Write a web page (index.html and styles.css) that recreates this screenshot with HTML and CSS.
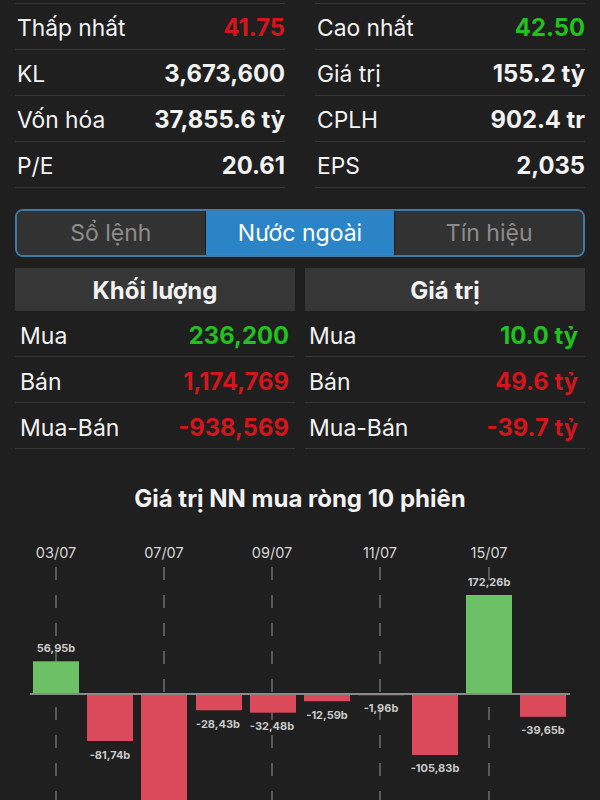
FILE: index.html
```html
<!DOCTYPE html>
<html lang="vi">

<head>
    <meta charset="UTF-8">
    <meta name="viewport" content="width=device-width, initial-scale=1.0">
    <title>Nước ngoài</title>
    <link rel="stylesheet" href="styles.css">
</head>

<body>
    <div class="stats">
        <div class="stats-col">
            <div class="stat-row"><span class="label">Thấp nhất</span><span class="value down">41.75</span></div>
            <div class="stat-row"><span class="label">KL</span><span class="value">3,673,600</span></div>
            <div class="stat-row"><span class="label">Vốn hóa</span><span class="value">37,855.6 tỷ</span></div>
            <div class="stat-row"><span class="label">P/E</span><span class="value">20.61</span></div>
        </div>
        <div class="stats-col">
            <div class="stat-row"><span class="label">Cao nhất</span><span class="value up">42.50</span></div>
            <div class="stat-row"><span class="label">Giá trị</span><span class="value">155.2 tỷ</span></div>
            <div class="stat-row"><span class="label">CPLH</span><span class="value">902.4 tr</span></div>
            <div class="stat-row"><span class="label">EPS</span><span class="value">2,035</span></div>
        </div>
    </div>

    <div class="tabs">
        <div class="tab">Sổ lệnh</div>
        <div class="tab active">Nước ngoài</div>
        <div class="tab">Tín hiệu</div>
    </div>

    <div class="foreign">
        <div class="foreign-col">
            <div class="foreign-header">Khối lượng</div>
            <div class="foreign-row"><span>Mua</span><span class="value up">236,200</span></div>
            <div class="foreign-row"><span>Bán</span><span class="value down">1,174,769</span></div>
            <div class="foreign-row"><span>Mua-Bán</span><span class="value down">-938,569</span></div>
        </div>
        <div class="foreign-col right">
            <div class="foreign-header">Giá trị</div>
            <div class="foreign-row"><span>Mua</span><span class="value up">10.0 tỷ</span></div>
            <div class="foreign-row"><span>Bán</span><span class="value down">49.6 tỷ</span></div>
            <div class="foreign-row"><span>Mua-Bán</span><span class="value down">-39.7 tỷ</span></div>
        </div>
    </div>

    <div class="chart">
        <h2 class="chart-title">Giá trị NN mua ròng 10 phiên</h2>
        <!-- viewBox dùng toạ độ trang để dễ canh -->
        <svg class="chart-svg" width="600" height="288" viewBox="0 512 600 288">
            <g class="dates">
                <text x="56" y="558">03/07</text>
                <text x="164" y="558">07/07</text>
                <text x="272" y="558">09/07</text>
                <text x="380" y="558">11/07</text>
                <text x="489" y="558">15/07</text>
            </g>
            <g class="grid">
                <line x1="56" y1="567" x2="56" y2="800" />
                <line x1="164" y1="567" x2="164" y2="800" />
                <line x1="272" y1="567" x2="272" y2="800" />
                <line x1="380" y1="567" x2="380" y2="800" />
                <line x1="489" y1="567" x2="489" y2="800" />
            </g>
            <g class="bars">
                <rect class="pos" x="33" y="661.3" width="46" height="32.7" />
                <rect class="neg" x="87" y="694" width="46" height="47" />
                <rect class="neg" x="141" y="694" width="46" height="120" />
                <rect class="neg" x="196" y="694" width="46" height="16.3" />
                <rect class="neg" x="250" y="694" width="46" height="18.7" />
                <rect class="neg" x="304" y="694" width="46" height="7.2" />
                <rect class="neg" x="358" y="694" width="46" height="1.3" />
                <rect class="neg" x="412" y="694" width="46" height="61" />
                <rect class="pos" x="466" y="595" width="46" height="99" />
                <rect class="neg" x="520" y="694" width="46" height="22.8" />
            </g>
            <line class="axis" x1="30" y1="694" x2="570" y2="694" />
            <g class="values">
                <text x="56" y="652">56,95b</text>
                <text x="110" y="759">-81,74b</text>
                <text x="218" y="728">-28,43b</text>
                <text x="272" y="730">-32,48b</text>
                <text x="327" y="719">-12,59b</text>
                <text x="381" y="712">-1,96b</text>
                <text x="435" y="772">-105,83b</text>
                <text x="489" y="586">172,26b</text>
                <text x="543" y="734">-39,65b</text>
            </g>
        </svg>
    </div>
</body>

</html>
```

FILE: styles.css
```css
body {
    font-family: Inter, "Liberation Sans", sans-serif;
    margin: 0;
    padding: 0;
    background-color: #1f1f1f;
    color: #f2f2f2;
    height: 800px;
    overflow: hidden;
}

.stats {
    display: grid;
    grid-template-columns: 1fr 1fr;
    column-gap: 30px;
    padding: 3px 15px 0 15px;
}

.stat-row {
    display: flex;
    justify-content: space-between;
    align-items: center;
    height: 45px;
    padding: 2px 0 0 2px;
    box-sizing: border-box;
    height: 46px;
    border-top: 1px solid #373737;
    font-size: 22.8px;
}

.stat-row:last-child {
    border-bottom: 1px solid #373737;
    height: 47px;
}

.value {
    font-weight: bold;
    font-size: 23.8px;
}

.up {
    color: #21c21f;
}

.down {
    color: #d4161c;
}

.tabs {
    display: grid;
    grid-template-columns: 1fr 1fr 1fr;
    margin: 21px 15px 0 15px;
    height: 44px;
    border: 2px solid #3c7ba6;
    border-radius: 8px;
    overflow: hidden;
    background-color: #1a1a1a;
}

.tab {
    display: flex;
    justify-content: center;
    align-items: center;
    background-color: #333232;
    color: #8c8c8c;
    font-size: 23px;
}

.tab:first-child {
    margin-right: 1px;
}

.tab:last-child {
    margin-left: 1px;
}

.tab.active {
    background-color: #2b84c6;
    color: #fff;
}

.foreign {
    display: grid;
    grid-template-columns: 1fr 1fr;
    column-gap: 10px;
    margin: 11px 15px 0 15px;
}

.foreign-header {
    height: 43px;
    line-height: 45px;
    background-color: #363636;
    text-align: center;
    font-size: 24px;
    font-weight: bold;
}

.foreign-row {
    display: flex;
    justify-content: space-between;
    align-items: center;
    box-sizing: border-box;
    height: 46px;
    padding: 4px 6px 0 5px;
    border-bottom: 1px solid #373737;
    font-size: 23px;
}

.foreign-col.right .foreign-row {
    padding: 4px 7px 0 4px;
}

.chart-title {
    margin: 37px 0 0 0;
    height: 26px;
    line-height: 26px;
    text-align: center;
    font-size: 24px;
    font-weight: bold;
    color: #f2f2f2;
}

.chart-svg {
    display: block;
}

.dates text {
    font-size: 14.5px;
    fill: #d6d6d6;
    text-anchor: middle;
}

.grid line {
    stroke: #6e6e6e;
    stroke-width: 1.5;
    stroke-dasharray: 13 15;
}

.bars .pos {
    fill: #6cc066;
}

.bars .neg {
    fill: #da4a5b;
}

.axis {
    stroke: #8a8a8a;
    stroke-width: 2;
}

.values text {
    font-size: 11px;
    font-weight: bold;
    fill: #c9c9c9;
    text-anchor: middle;
}
```
